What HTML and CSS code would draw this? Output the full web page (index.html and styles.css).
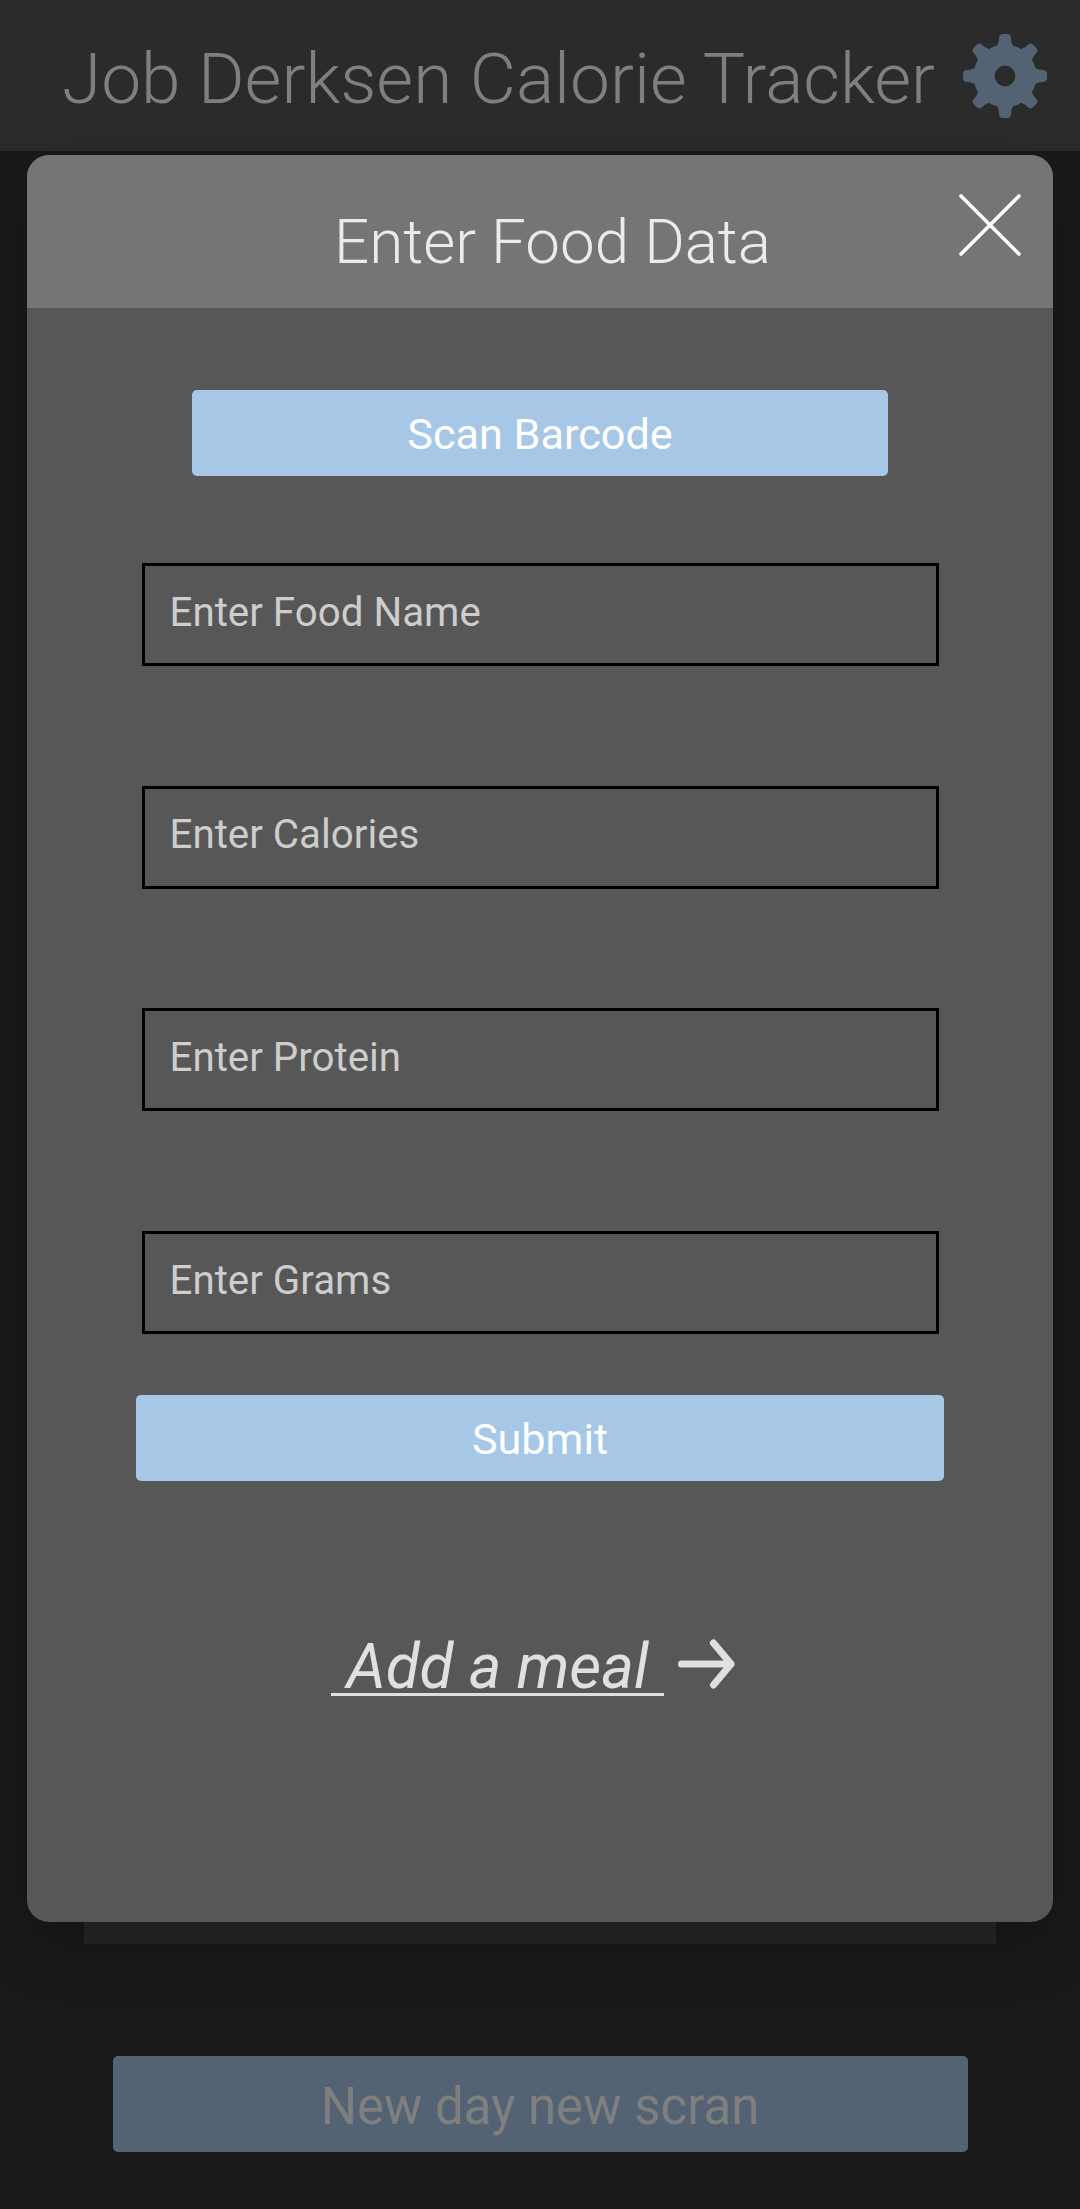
FILE: index.html
```html
<!DOCTYPE html>
<html lang="en">
<head>
<meta charset="utf-8">
<title>Calorie Tracker</title>
<link rel="stylesheet" href="styles.css">
</head>
<body>
<div class="screen">
  <header class="app-bar">
    <h1 class="app-title">Job Derksen Calorie Tracker</h1>
    <svg class="gear" viewBox="-42 -42 84 84" aria-hidden="true">
      <defs>
        <path id="tooth" d="M-9-29C-7-31-6-34-6-37.500Q-6-42-2-42H2Q6-42 6-37.500C6-34 7-31 9-29L12-24H-12Z"/>
        <mask id="hub"><rect x="-42" y="-42" width="84" height="84" fill="#fff"/><circle r="10.400" fill="#000"/></mask>
      </defs>
      <g mask="url(#hub)">
        <circle r="31.500"/>
        <use href="#tooth"/>
        <use href="#tooth" transform="rotate(45)"/>
        <use href="#tooth" transform="rotate(90)"/>
        <use href="#tooth" transform="rotate(135)"/>
        <use href="#tooth" transform="rotate(180)"/>
        <use href="#tooth" transform="rotate(225)"/>
        <use href="#tooth" transform="rotate(270)"/>
        <use href="#tooth" transform="rotate(315)"/>
      </g>
    </svg>
  </header>
  <main class="day">
    <div class="food-list"></div>
    <button class="new-day">New day new scran</button>
  </main>

  <section class="modal">
    <header class="modal-head">
      <h2 class="modal-title">Enter Food Data</h2>
      <svg class="close" viewBox="0 0 62 62" aria-hidden="true"><path d="M2 2L60 60M60 2L2 60"/></svg>
    </header>
    <form class="modal-body">
      <button type="button" class="btn scan">Scan Barcode</button>
      <div class="fields">
        <input class="field" placeholder="Enter Food Name">
        <input class="field" placeholder="Enter Calories">
        <input class="field" placeholder="Enter Protein">
        <input class="field" placeholder="Enter Grams">
      </div>
      <button type="button" class="btn submit">Submit</button>
      <div class="meal">
        <a class="meal-link">&nbsp;Add a meal&nbsp;</a>
        <svg class="arrow" viewBox="0 0 57 50" aria-hidden="true"><path d="M3.500 25H53M35.500 4L53 25L35.500 46"/></svg>
      </div>
    </form>
  </section>
</div>
</body>
</html>
```
FILE: styles.css
```css
* { box-sizing: border-box; }
body {
  margin: 0;
  background: #191919;
  font-family: Roboto, "Liberation Sans", sans-serif;
}
h1, h2 { margin: 0; font-weight: 300; }
button, input { font-family: inherit; margin: 0; }

.screen {
  position: relative;
  height: 2209px;
  overflow: hidden;
  display: flex;
  flex-direction: column;
}

.app-bar {
  height: 151px;
  padding: 1px 33px 0 62px;
  background: #2b2b2b;
  display: flex;
  align-items: center;
  justify-content: space-between;
}
.app-title {
  font-size: 71.200px;
  line-height: 84px;
  padding-top: 6px;
  color: #7f7f7f;
  white-space: nowrap;
}
.gear { width: 84px; height: 84px; fill: #546373; flex: none; }

.day {
  flex: 1;
  display: flex;
  flex-direction: column;
  align-items: center;
  padding-top: 93px;
}
.food-list { width: 912px; height: 1700px; background: #262626; }
.new-day {
  width: 855px;
  height: 96px;
  margin-top: 112px;
  padding: 6px 0 0;
  border: 0;
  border-radius: 5px;
  background: #546373;
  color: #7f7f7f;
  font-size: 51px;
  line-height: 60px;
}

.modal {
  position: absolute;
  left: 27px;
  top: 155px;
  width: 1026px;
  height: 1767px;
  border-radius: 22px;
  overflow: hidden;
  background: #575757;
  box-shadow: 0 22px 60px rgba(0, 0, 0, .2);
}
.modal-head {
  height: 153px;
  background: #757575;
  display: flex;
  justify-content: flex-end;
  padding: 39px 32px 0 0;
}
.modal-title {
  flex: 1;
  padding: 12px 0 0 119px;
  font-size: 61.900px;
  line-height: 72px;
  text-align: center;
  color: #ebebeb;
}
.close {
  width: 62px;
  height: 62px;
  fill: none;
  stroke: #fff;
  stroke-width: 3.600;
  stroke-linecap: round;
}

.modal-body {
  display: flex;
  flex-direction: column;
  align-items: center;
  padding-top: 82px;
}
.btn {
  height: 86px;
  padding: 3px 0 0;
  border: 0;
  border-radius: 5px;
  background: #a6c7e6;
  color: #fff;
  font-size: 43.200px;
  line-height: 50px;
}
.scan { width: 696px; }
.submit { width: 808px; margin-top: 61px; }
.fields {
  display: flex;
  flex-direction: column;
  gap: 119.700px;
  margin-top: 87px;
}
.field {
  width: 797px;
  height: 103px;
  padding: 0 28px 5px 25px;
  border: 3px solid #000;
  border-radius: 0;
  outline: 0;
  background: none;
  font-size: 40.300px;
}
.field::placeholder { color: #cdcdcd; opacity: 1; }

.meal {
  display: flex;
  align-items: flex-start;
  gap: 14px;
  margin-top: 149px;
  padding-right: 14px;
}
.meal-link {
  font-size: 62px;
  font-style: italic;
  line-height: 74px;
  height: 66px;
  color: #e0e0e0;
  border-bottom: 3px solid #e0e0e0;
}
.arrow {
  width: 57px;
  height: 50px;
  margin-top: 9px;
  fill: none;
  stroke: #e0e0e0;
  stroke-width: 7;
  stroke-linecap: round;
  stroke-linejoin: round;
}
```
